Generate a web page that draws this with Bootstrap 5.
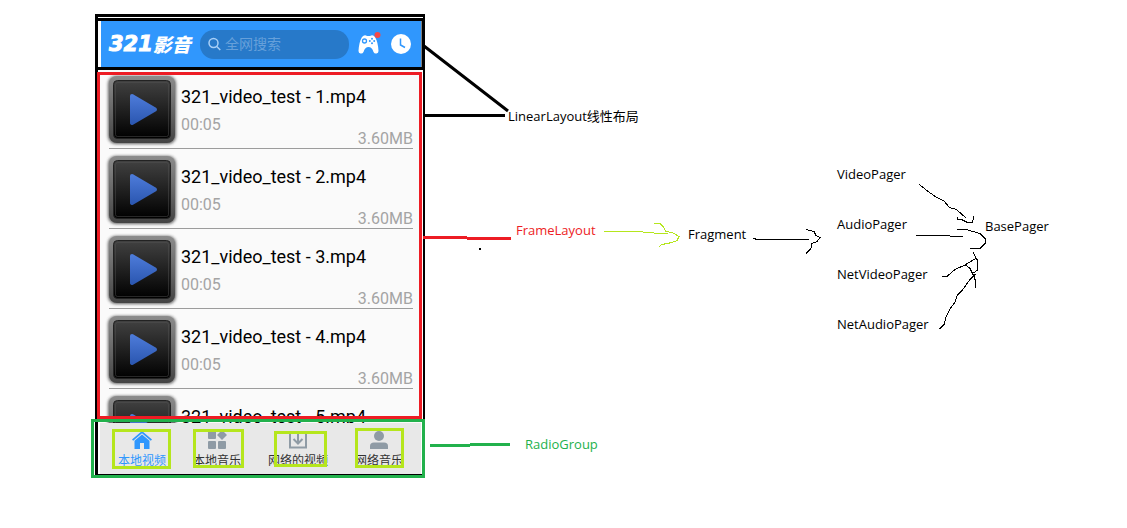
<!DOCTYPE html>
<html lang="zh-CN">
<head>
<meta charset="utf-8">
<meta name="viewport" content="width=device-width, initial-scale=1">
<title>321影音 布局结构</title>
<link href="https://cdn.jsdelivr.net/npm/bootstrap@5.3.0/dist/css/bootstrap.min.css" rel="stylesheet">
<style>
  body { background: #fff; font-family: "Open Sans", "Noto Sans CJK SC", sans-serif; }
  .board { padding: 14px 0 0 95px; min-height: 100vh; }
  .phone { width: 330px; border: 3px solid #000; border-bottom-width: 2px; border-right-width: 2px; padding: 4px 2px 0 3px; color: #000; font-family: Roboto, "Noto Sans CJK SC", sans-serif; }
  .topbar { height: 46px; background: #3097fd; padding: 0 10px 0 8px; }
  .logo { width: 84px; color: #fff; font: italic 900 19px/24px "Noto Sans CJK SC", sans-serif; text-decoration: none; white-space: nowrap; }
  .logo-num { font: italic bold 21px/24px "DejaVu Sans", sans-serif; -webkit-text-stroke: 1px #fff; }
  .search { width: 149px; height: 29px; margin: 0 8px 0 7px; padding-left: 8px; border-radius: 14px; background: #2779c9; }
  .search input { width: 100%; border: 0; background: none; outline: 0; color: #fff; padding: 0 4px; font-size: 14px; line-height: 20px; }
  .search input::placeholder { color: #66a0da; opacity: 1; }
  .tool { border: 0; padding: 0; background: none; line-height: 0; }
  .videos { height: 354px; margin: 2px 0 0 -1px; padding: 0 8px 0 9px; overflow: hidden; background: #fafafa; }
  .video { height: 80px; border-bottom: 1px solid #9c9c9c; }
  .thumb { margin: 2px 1px 0 -5px; }
  .video-name { margin-top: 16px; font-size: 18px; line-height: 24px; white-space: nowrap; }
  .meta { font-size: 16px; line-height: 18px; color: #a4a4a4; }
  .video-time { margin-top: 7px; }
  .video-size { margin-top: 21px; }
  .tabs { height: 51px; margin-left: -1px; padding: 8px 18px 0; background: #e8e8e8; }
  .tab { font-size: 12px; line-height: 16px; color: #333; cursor: pointer; }
  .btn-check:checked + .tab { color: #3097fd; }
  .tab svg { color: #8f9ba5; margin-bottom: 4px; }
  .btn-check:checked + .tab svg { color: #3097fd; }
  .notes { left: 0; top: 0; pointer-events: none; }
  .node { position: absolute; font-size: 13px; line-height: 18px; color: #000; white-space: nowrap; }
  .n-linear { left: 508px; top: 107px; }
  .n-frame { left: 516px; top: 221px; color: #ed1c24; }
  .n-fragment { left: 688px; top: 225px; }
  .n-video { left: 837px; top: 165px; }
  .n-audio { left: 837px; top: 215px; }
  .n-netvideo { left: 837px; top: 265px; }
  .n-netaudio { left: 837px; top: 315px; }
  .n-base { left: 985px; top: 217px; }
  .n-radio { left: 525px; top: 435px; color: #22b14c; }
</style>
</head>
<body>
<svg width="0" height="0" class="position-absolute" aria-hidden="true">
  <defs>
    <linearGradient id="rim" x1="0" y1="0" x2="0" y2="1"><stop offset="0" stop-color="#8c8c8c"/><stop offset="1" stop-color="#444"/></linearGradient>
    <linearGradient id="face" x1="0" y1="0" x2="0" y2="1"><stop offset="0" stop-color="#414141"/><stop offset="1" stop-color="#000"/></linearGradient>
    <linearGradient id="blue" x1="0" y1="0" x2="0" y2="1"><stop offset="0" stop-color="#4c7ad8"/><stop offset="1" stop-color="#2c58b2"/></linearGradient>
    <filter id="soft" x="-20%" y="-20%" width="140%" height="140%"><feGaussianBlur stdDeviation="1.6"/></filter>
    <symbol id="play" viewBox="0 0 76 76">
      <rect x="4" y="5" width="68" height="68" rx="8" fill="#333" opacity=".75" filter="url(#soft)"/>
      <rect x="5" y="5" width="66" height="67" rx="8" fill="url(#rim)"/>
      <rect x="9.500" y="9.500" width="57" height="58" rx="4" fill="url(#face)" stroke="#222"/>
      <rect x="11.500" y="11.500" width="53" height="54" rx="2" fill="none" stroke="#555" stroke-opacity=".45"/>
      <path d="M28 25 L51 38.500 L28 52 Z" fill="url(#blue)" stroke="url(#blue)" stroke-width="4" stroke-linejoin="round"/>
    </symbol>
  </defs>
</svg>
<main class="board position-relative">
  <section class="phone">
    <header class="topbar d-flex align-items-center">
      <a href="#" class="logo d-flex align-items-center"><span class="logo-num">321</span><span>影音</span></a>
      <label class="search d-flex align-items-center">
        <svg width="13" height="14" viewBox="0 0 13 14" fill="none" stroke="#a9d0f7" stroke-width="1.500" class="flex-shrink-0" aria-hidden="true"><circle cx="5.500" cy="6" r="4.500"/><path d="M8.800 9.500l3.500 3.500"/></svg>
        <input type="text" placeholder="全网搜索" aria-label="全网搜索">
      </label>
      <button type="button" class="tool" aria-label="游戏">
        <svg width="24" height="24" viewBox="0 0 24 24">
          <path d="M5 5Q7.500 2 10 4h3q3-2 5 1 3 5 3.500 14 0 2-2 2.500-2 .5-3-1.500Q15 15 11.500 15T6.500 20q-1 2-3 1.500T1.500 19Q2 10 5 5z" fill="#fff"/>
          <circle cx="7.500" cy="9" r="2" fill="none" stroke="#3097fd" stroke-width="1.300"/>
          <g fill="#3097fd"><circle cx="15" cy="6.800" r="1"/><circle cx="15" cy="11.200" r="1"/><circle cx="12.800" cy="9" r="1"/><circle cx="17.200" cy="9" r="1"/></g>
          <circle cx="20.500" cy="3" r="3" fill="#f54848"/>
        </svg>
      </button>
      <button type="button" class="tool ms-auto" aria-label="历史">
        <svg width="20" height="20" viewBox="0 0 20 20"><circle cx="10" cy="10" r="10" fill="#fff"/><path d="M9.500 4.500v6.500l4.500 2.500" fill="none" stroke="#3097fd" stroke-width="1.500"/></svg>
      </button>
    </header>

    <div class="videos">
      <article class="video d-flex">
        <svg class="thumb flex-shrink-0" width="76" height="76"><use href="#play"/></svg>
        <div class="flex-fill"><div class="video-name">321_video_test - 1.mp4</div><div class="meta d-flex justify-content-between"><span class="video-time">00:05</span><span class="video-size">3.60MB</span></div></div>
      </article>
      <article class="video d-flex">
        <svg class="thumb flex-shrink-0" width="76" height="76"><use href="#play"/></svg>
        <div class="flex-fill"><div class="video-name">321_video_test - 2.mp4</div><div class="meta d-flex justify-content-between"><span class="video-time">00:05</span><span class="video-size">3.60MB</span></div></div>
      </article>
      <article class="video d-flex">
        <svg class="thumb flex-shrink-0" width="76" height="76"><use href="#play"/></svg>
        <div class="flex-fill"><div class="video-name">321_video_test - 3.mp4</div><div class="meta d-flex justify-content-between"><span class="video-time">00:05</span><span class="video-size">3.60MB</span></div></div>
      </article>
      <article class="video d-flex">
        <svg class="thumb flex-shrink-0" width="76" height="76"><use href="#play"/></svg>
        <div class="flex-fill"><div class="video-name">321_video_test - 4.mp4</div><div class="meta d-flex justify-content-between"><span class="video-time">00:05</span><span class="video-size">3.60MB</span></div></div>
      </article>
      <article class="video d-flex">
        <svg class="thumb flex-shrink-0" width="76" height="76"><use href="#play"/></svg>
        <div class="flex-fill"><div class="video-name">321_video_test - 5.mp4</div></div>
      </article>
    </div>

    <div class="tabs d-flex justify-content-between" role="radiogroup">
      <input class="btn-check" type="radio" name="tab" id="t1" checked>
      <label class="tab d-flex flex-column align-items-center" for="t1">
        <svg width="20" height="18" viewBox="0 0 20 18" fill="currentColor"><path d="M10 0L20 8.500l-1.200 1.200L10 2.300 1.200 9.700 0 8.500z"/><path d="M10 3.500l7.500 6.300V18H12v-6H8v6H2.500V9.800z"/></svg>本地视频</label>
      <input class="btn-check" type="radio" name="tab" id="t2">
      <label class="tab d-flex flex-column align-items-center" for="t2">
        <svg width="20" height="18" viewBox="0 0 20 18" fill="currentColor"><rect x="1" width="8" height="8" rx="1"/><path d="M15 -1l4.500 4.500q.5.500 0 1L15 9l-4.500-4.500q-.5-.5 0-1z"/><rect x="1" y="10" width="8" height="8" rx="1"/><rect x="11" y="10" width="8" height="8" rx="1"/></svg>本地音乐</label>
      <input class="btn-check" type="radio" name="tab" id="t3">
      <label class="tab d-flex flex-column align-items-center" for="t3">
        <svg width="20" height="18" viewBox="0 0 20 18" fill="none" stroke="currentColor" stroke-width="2"><path d="M5 1H2v15.500h16V1h-3M10 0v12M5.500 8l4.500 4.500L14.500 8"/></svg>网络的视频</label>
      <input class="btn-check" type="radio" name="tab" id="t4">
      <label class="tab d-flex flex-column align-items-center" for="t4">
        <svg width="20" height="18" viewBox="0 0 20 18" fill="currentColor"><circle cx="10" cy="5" r="5"/><path d="M1 18v-3q0-3.500 4-3.500h10q4 0 4 3.500v3z"/></svg>网络音乐</label>
    </div>
  </section>

  <svg class="notes position-absolute" width="1100" height="500" fill="none" aria-hidden="true">
    <g stroke="#000" stroke-width="3">
      <path d="M98 19.500H423V68.500H98"/>
      <path d="M424 46L508 111M424 115.500H505"/>
    </g>
    <rect x="98.500" y="73.500" width="322" height="344" stroke="#ed1c24" stroke-width="3"/>
    <path d="M423 237.500H467M467 238.500H511" stroke="#ed1c24" stroke-width="3"/>
    <path d="M480 248v2" stroke="#000" stroke-width="2"/>
    <rect x="92.500" y="420.500" width="331" height="56" stroke="#22b14c" stroke-width="3"/>
    <path d="M430 445.500H470M470 444.500H510" stroke="#22b14c" stroke-width="3"/>
    <g stroke="#b5e61d" stroke-width="3">
      <rect x="113.500" y="430.500" width="56" height="37"/>
      <rect x="194.500" y="430.500" width="48" height="36"/>
      <rect x="275.500" y="432.500" width="50" height="33"/>
      <rect x="356.500" y="429.500" width="46" height="37"/>
    </g>
    <path d="M604 231.500H637l12 1 9 1h10M654 223.500h6l3 3 3 5 6 1 7 4-2 4-5 2-5 1-5 1-3 2" stroke="#b5e61d" shape-rendering="crispEdges"/>
    <g stroke="#000" shape-rendering="crispEdges">
      <path d="M753 238.500l5 1H809M806 229.500l8 2 2 4 4 2-3 4-5 2-1 5-5 5"/>
      <path d="M919.500 184.500l6 5 11 8 7 3 6 7 7 2 10 9M957.500 217v2l5 1 6 3 4-1 1-4v-2"/>
      <path d="M916 235.500h21l26 1M957 229.500h9l14 4 5 5v5l-5 5-10 0"/>
      <path d="M942 276.500h5l8-7 9-4 5-3 7-4M965 264.500l5 4 4 8 2 6-1 6M973 252.500l4 7v11l-3 2h-3M939.500 329l5-5 1-6 5-10 4-5 3-8 5-5 7-10 6-6"/>
    </g>
  </svg>
  <span class="node n-linear">LinearLayout线性布局</span>
  <span class="node n-frame">FrameLayout</span>
  <span class="node n-fragment">Fragment</span>
  <span class="node n-video">VideoPager</span>
  <span class="node n-audio">AudioPager</span>
  <span class="node n-netvideo">NetVideoPager</span>
  <span class="node n-netaudio">NetAudioPager</span>
  <span class="node n-base">BasePager</span>
  <span class="node n-radio">RadioGroup</span>
</main>
</body>
</html>
